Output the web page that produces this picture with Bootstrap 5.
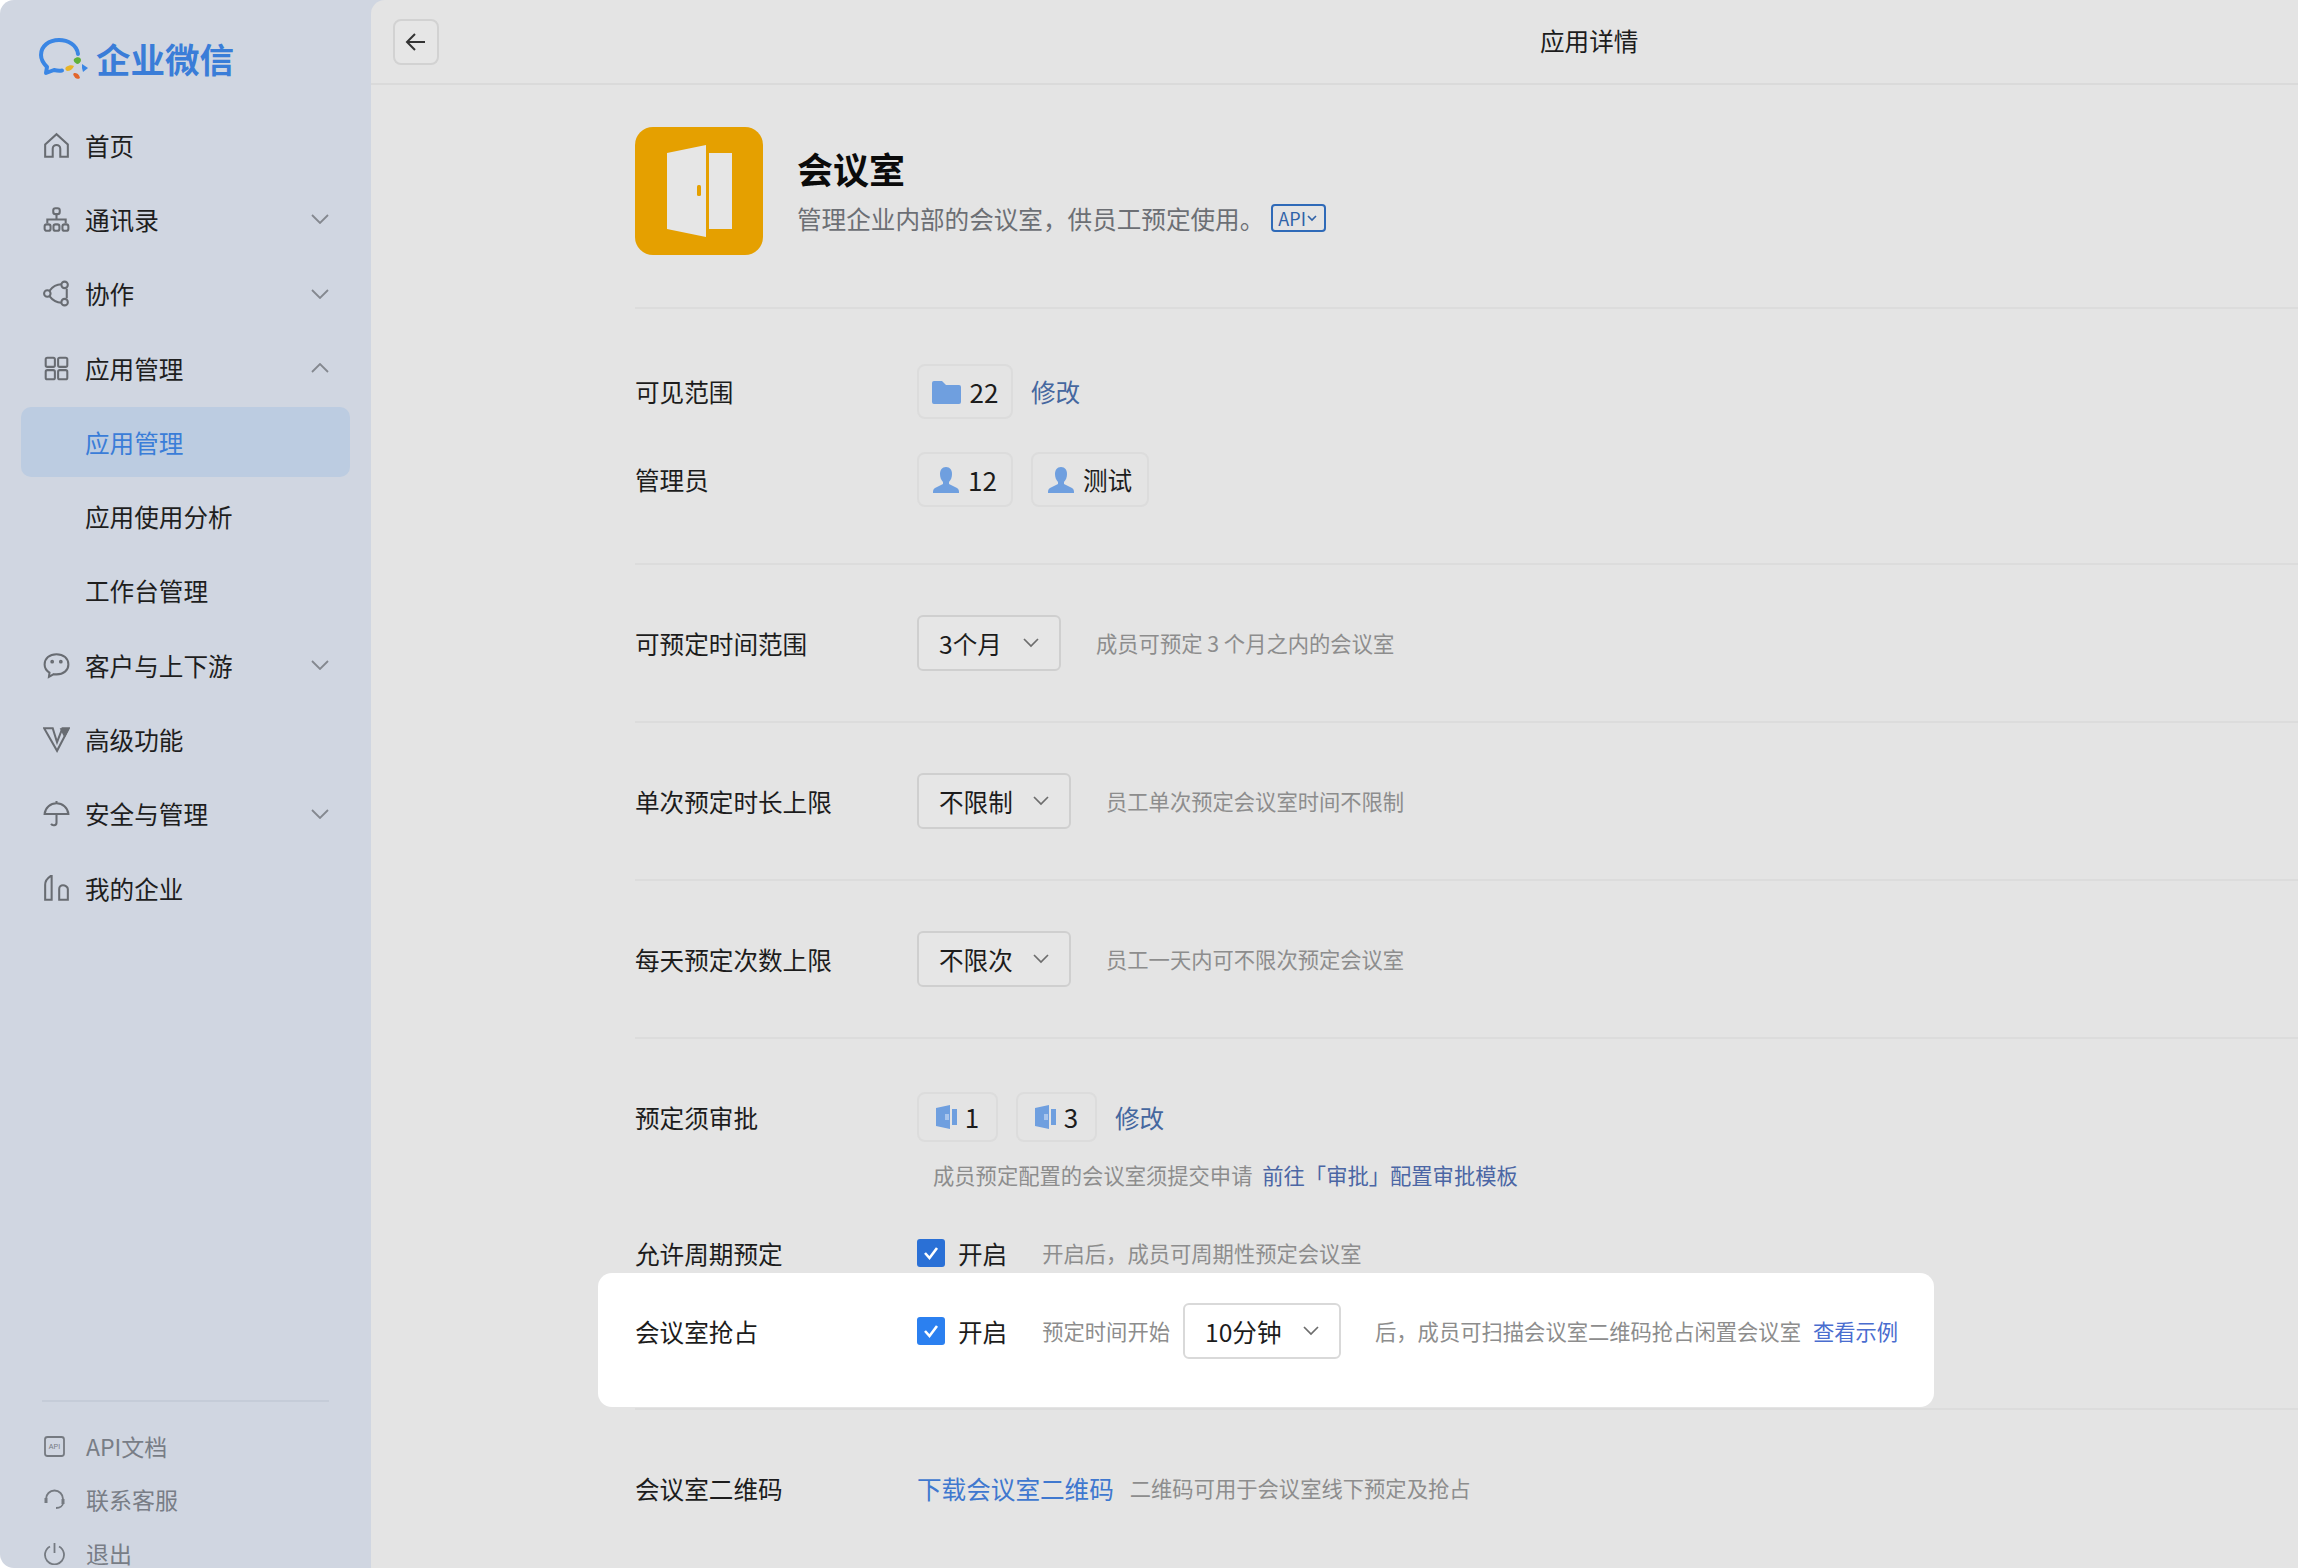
<!DOCTYPE html>
<html lang="zh-CN">
<head>
<meta charset="utf-8">
<title>应用详情</title>
<link href="https://cdn.jsdelivr.net/npm/bootstrap@5.3.0/dist/css/bootstrap.min.css" rel="stylesheet">
<style>
html,body{height:100%;overflow:hidden}
body{background:#fff;font-family:"Noto Sans CJK SC","Noto Sans",sans-serif;font-size:24.6px;color:#1c1c1c}
.win{height:1568px;background:#d0d6e1;border-radius:14px 0 0 14px;overflow:hidden}
.side{width:371px;flex:none}
.brand{height:108px;padding:8px 0 0 39px;gap:7px;color:#3a7dd8;font-size:34.5px;font-weight:700;line-height:1;flex:none}
.navcol{flex:none}
.mitem{height:74.3px;padding:0 42px 0 44px;color:#1e1e1e;flex:none}
.mitem svg.ic{width:27px;height:27px;margin:0 15px 0 -1px;flex:none;fill:none;stroke:#686c72;stroke-width:1.9}
.mitem .chev{width:18px;height:10px;margin-left:auto;fill:none;stroke:#84888f;stroke-width:1.8}
.subitem{padding-left:85px}
.subon{height:70px;margin:2px 21px 2.300px;padding-left:64px;background:#bccce1;border-radius:10px;color:#3a7dd8;flex:none}
.sidefoot{margin:475px 42px 0;border-top:2px solid #c5ccd8;padding-top:17px;flex:none}
.fitem{height:53.500px;font-size:23px;line-height:1;color:#787d86;gap:20px;margin-left:1px}
.fitem:last-child{height:28px;margin-top:13px}
.fitem svg{width:23px;height:23px;flex:none;fill:none;stroke:#757a81;stroke-width:1.8}
.pane{background:#e4e4e4;border-radius:14px 0 0 0;min-width:0;overflow:hidden}
.topbar{height:85px;border-bottom:2px solid #dadada;padding-left:22px;flex:none}
.backb{width:46px;height:46px;border:2px solid #d2d2d2;border-radius:8px;background:#e6e6e6;padding:0}
.pagett{margin-left:1101px;white-space:nowrap;line-height:1;padding-bottom:3px}
.body-wrap{padding-left:264px;flex:none}
.sect{border-bottom:2px solid #dcdcdc}
.apphead{height:224px;padding-top:42px}
.appicon{width:128px;height:128px;border-radius:18px;background:#e5a000;flex:none}
.appmeta{margin-left:34px}
.apptt{font-size:36px;font-weight:700;line-height:1;color:#0b0b0b;margin-top:23px}
.appsub{color:#6c6f74;margin-top:15px;line-height:34px}
.apibadge{width:55px;height:28px;border:2px solid #2f6ab8;border-radius:4px;font-size:18px;color:#2f62a8;padding-left:5px;margin-left:7px;line-height:1;flex:none}
.apibadge svg{width:10px;height:7px;fill:none;stroke:#2f62a8;stroke-width:1.6;margin-left:1px}
.flabel{width:282px;flex:none;white-space:nowrap}
.rowh{min-height:55px}
.tagb{height:55px;border:2px solid #dcdcdc;border-radius:8px;gap:9px;white-space:nowrap;flex:none}
.tagb svg{fill:#6f9fdf;flex:none}
.tagb svg .notch{fill:#a9c5ec}
.num{font-size:26px;line-height:1}
.tagw96{width:96px}
.tagw118{width:118px;margin-left:18px}
.tags{height:50px;width:81px;gap:8px}
.tags2{margin-left:18px}
.mod{margin-left:18px}
.lnk{color:#45679f;text-decoration:none}
.lnk2{color:#3f78cf;text-decoration:none}
.hint{font-size:21.300px;color:#8d8d8d;white-space:nowrap;flex:none}
.hint .lnk{color:#4b66a4}
.hintgap{margin-left:35px}
.apprlink{margin-left:5px}
.selb{height:56px;border:2px solid #cfcfcf;border-radius:6px;padding:0 20px;background:#e6e6e6;white-space:nowrap;justify-content:space-between;flex:none}
.selw144{width:144px}
.selw154{width:154px}
.selb svg{width:16px;height:10px;fill:none;stroke:#6d6d6d;stroke-width:1.7;flex:none}
.s1{padding:55px 0 56px}
.s1 .rowh+.rowh{margin-top:33px}
.ssel{padding:50px 0 50px}
.cbx{width:28px;height:28px;border-radius:3px;background:#2a70d6;flex:none}
.cbx svg{width:18px;height:18px;fill:none;stroke:#fff;stroke-width:2.600}
.cbt{margin-left:13px;margin-right:35px;white-space:nowrap;flex:none}
.hl{background:#fff;border-radius:14px;width:1336px;height:134px;margin:0 0 1px -37px;padding:0 0 18px 37px}
.hl .cbx{background:#2b80f0}
.hl .selb{background:#fff;border-color:#d9d9d9;width:158px;margin:0 34px 0 13px}
.hl .hint .lnk{color:#4a6dcf}
.s6{padding:53px 0 0}
.toprow{height:50px}
.apprhint{margin:18px 0 0 298px;line-height:30px}
.cyc{height:40px;margin-top:43px}
.exlink{margin-left:12px}
.lastrow{height:156px}
</style>
</head>
<body>
<div class="win d-flex">
  <aside class="side d-flex flex-column">
    <div class="brand d-flex align-items-center">
      <svg width="50" height="42" viewBox="0 0 50 42">
        <path d="M39 17C38 8 29 3 20 3 10 3 2 9 2 18c0 5 3 9 6 12l-1 6 8-3c2 .5 5 1 8 .5" fill="none" stroke="#3a86e4" stroke-width="4" stroke-linecap="round" stroke-linejoin="round"/>
        <path d="M35 22c3-3 7-2 7 1 0 2-2 4-4 4-2-1-4-3-3-5z" fill="#5fb13a"/>
        <path d="M27 30c3-2 6-2 8-1-1 3-4 5-7 5-2-1-2-3-1-4z" fill="#e8b428"/>
        <path d="M35 36c3 0 5 1 6 5-3 2-5 0-6-2-1-1-1-2 0-3z" fill="#e2662c"/>
        <path d="M43 27l6 4-5 4-1-4z" fill="#3a86e4"/>
      </svg>
      <span>企业微信</span>
    </div>
    <nav class="navcol d-flex flex-column">
      <div class="mitem d-flex align-items-center"><svg class="ic" viewBox="0 0 25 25"><path d="M2 11.500 12.500 2 23 11.500V23h-7v-7.500a3.500 3.500 0 0 0-7 0V23H2z"/></svg><span>首页</span></div>
      <div class="mitem d-flex align-items-center"><svg class="ic" viewBox="0 0 25 25"><rect x="9.500" y="2" width="6" height="5.500" rx="2"/><path d="M12.500 7.500v5M4 16v-3.500h17V16"/><rect x="1.500" y="17" width="5.500" height="6" rx="2"/><rect x="9.700" y="17" width="5.500" height="6" rx="2"/><rect x="18" y="17" width="5.500" height="6" rx="2"/></svg><span>通讯录</span><svg class="chev" viewBox="0 0 18 10"><path d="M1 1l8 8 8-8"/></svg></div>
      <div class="mitem d-flex align-items-center"><svg class="ic" viewBox="0 0 25 25"><circle cx="20" cy="4.500" r="3"/><circle cx="4" cy="12.500" r="3"/><circle cx="20" cy="20.500" r="3"/><path d="M17 4C12 4 9 6 6 10M6 15c3 4 6 6 11 6M22 8v9"/></svg><span>协作</span><svg class="chev" viewBox="0 0 18 10"><path d="M1 1l8 8 8-8"/></svg></div>
      <div class="mitem d-flex align-items-center"><svg class="ic" viewBox="0 0 25 25"><rect x="2.500" y="2.500" width="8.500" height="8.500" rx="1.500"/><rect x="14" y="2.500" width="8.500" height="8.500" rx="1.500"/><rect x="2.500" y="14" width="8.500" height="8.500" rx="1.500"/><rect x="14" y="14" width="8.500" height="8.500" rx="1.500"/></svg><span>应用管理</span><svg class="chev" viewBox="0 0 18 10"><path d="M1 9l8-8 8 8"/></svg></div>
      <div class="subon d-flex align-items-center"><span>应用管理</span></div>
      <div class="mitem subitem d-flex align-items-center"><span>应用使用分析</span></div>
      <div class="mitem subitem d-flex align-items-center"><span>工作台管理</span></div>
      <div class="mitem d-flex align-items-center"><svg class="ic" viewBox="0 0 25 25"><path d="M12.500 2C6 2 1.500 6 1.500 11.500c0 3.500 2 6 4.500 7.500l-.5 4 4.500-2.500c1 .2 1.500.2 2.500.2C19 20.700 23.500 17 23.500 11.500S19 2 12.500 2z"/><circle cx="8.500" cy="9" r=".8"/><circle cx="16.500" cy="9" r=".8"/></svg><span>客户与上下游</span><svg class="chev" viewBox="0 0 18 10"><path d="M1 1l8 8 8-8"/></svg></div>
      <div class="mitem d-flex align-items-center"><svg class="ic" viewBox="0 0 25 25"><path d="M1 2h8l4 13 5-13h6L13 23z"/><path d="M17 3h6l-3 6z" fill="#686c72"/></svg><span>高级功能</span></div>
      <div class="mitem d-flex align-items-center"><svg class="ic" viewBox="0 0 25 25"><path d="M1.500 13C2 7 7 3 12.500 3S23 7 23.500 13zM12.500 1v2M12.500 13v8c0 3-4 3-5 1"/></svg><span>安全与管理</span><svg class="chev" viewBox="0 0 18 10"><path d="M1 1l8 8 8-8"/></svg></div>
      <div class="mitem d-flex align-items-center"><svg class="ic" viewBox="0 0 25 25"><path d="M2 23V9c0-3 2-6 5-8h1v22zM15 23V13c0-2 1.500-3.500 3.500-3.500S23 11 23 13v10z"/></svg><span>我的企业</span></div>
    </nav>
    <div class="sidefoot">
      <div class="fitem d-flex align-items-center"><svg viewBox="0 0 23 23"><rect x="2" y="2" width="19" height="19" rx="2.500"/><text x="11.500" y="14" font-size="7" text-anchor="middle" fill="#757a81" stroke="none" font-family="Liberation Sans">API</text></svg><span>API文档</span></div>
      <div class="fitem d-flex align-items-center"><svg viewBox="0 0 23 23"><path d="M3 14v-3a8.500 8.500 0 0 1 17 0v4c0 3-3 5-7 5"/><path d="M3 10v5M20 11v5" stroke-width="3"/></svg><span>联系客服</span></div>
      <div class="fitem d-flex align-items-center"><svg viewBox="0 0 23 23"><path d="M7 4.500a9.500 9.500 0 1 0 9 0M11.500 1v10"/></svg><span>退出</span></div>
    </div>
  </aside>

  <main class="pane flex-grow-1 d-flex flex-column">
    <header class="topbar d-flex align-items-center">
      <button class="backb d-flex align-items-center justify-content-center" type="button" aria-label="返回"><svg width="22" height="20" viewBox="0 0 22 20" fill="none" stroke="#333" stroke-width="2"><path d="M20 10H2M10 2l-8 8 8 8"/></svg></button>
      <div class="pagett">应用详情</div>
    </header>
    <div class="body-wrap">
      <section class="sect apphead d-flex">
        <div class="appicon d-flex align-items-center justify-content-center">
          <svg width="65" height="92" viewBox="0 0 65 92"><path d="M0 8 39 0v92L0 84z" fill="#e6e6e6"/><path d="M42 8h23v76H42z" fill="#e6e6e6"/><rect x="30" y="40" width="4" height="11" rx="1.500" fill="#e5a000"/></svg>
        </div>
        <div class="appmeta">
          <div class="apptt">会议室</div>
          <div class="appsub d-flex align-items-center">管理企业内部的会议室，供员工预定使用。<span class="apibadge d-inline-flex align-items-center">API<svg viewBox="0 0 10 7"><path d="M1 1l4 4 4-4"/></svg></span></div>
        </div>
      </section>

      <section class="sect s1">
        <div class="rowh d-flex align-items-center">
          <div class="flabel">可见范围</div>
          <div class="tagb tagw96 d-flex align-items-center justify-content-center"><svg width="29" height="24" viewBox="0 0 29 24"><path d="M0 3a2 2 0 0 1 2-2h8l4 4h13a2 2 0 0 1 2 2v15a2 2 0 0 1-2 2H2a2 2 0 0 1-2-2z"/></svg><span class="num">22</span></div>
          <a class="lnk mod" href="#">修改</a>
        </div>
        <div class="rowh d-flex align-items-center">
          <div class="flabel">管理员</div>
          <div class="tagb tagw96 d-flex align-items-center justify-content-center"><svg width="26" height="26" viewBox="0 0 26 26"><path d="M13 0c4 0 6 3 6 7 0 3-1 6-3 8v2l8 4c2 1 2 3 2 5H0c0-2 0-4 2-5l8-4v-2c-2-2-3-5-3-8 0-4 2-7 6-7z"/></svg><span class="num">12</span></div>
          <div class="tagb tagw118 d-flex align-items-center justify-content-center"><svg width="26" height="26" viewBox="0 0 26 26"><path d="M13 0c4 0 6 3 6 7 0 3-1 6-3 8v2l8 4c2 1 2 3 2 5H0c0-2 0-4 2-5l8-4v-2c-2-2-3-5-3-8 0-4 2-7 6-7z"/></svg><span>测试</span></div>
        </div>
      </section>

      <section class="sect ssel d-flex align-items-center">
        <div class="flabel">可预定时间范围</div>
        <div class="selb selw144 d-flex align-items-center"><span>3个月</span><svg viewBox="0 0 16 10"><path d="M1 1l7 7 7-7"/></svg></div>
        <div class="hint hintgap">成员可预定 3 个月之内的会议室</div>
      </section>

      <section class="sect ssel d-flex align-items-center">
        <div class="flabel">单次预定时长上限</div>
        <div class="selb selw154 d-flex align-items-center"><span>不限制</span><svg viewBox="0 0 16 10"><path d="M1 1l7 7 7-7"/></svg></div>
        <div class="hint hintgap">员工单次预定会议室时间不限制</div>
      </section>

      <section class="sect ssel d-flex align-items-center">
        <div class="flabel">每天预定次数上限</div>
        <div class="selb selw154 d-flex align-items-center"><span>不限次</span><svg viewBox="0 0 16 10"><path d="M1 1l7 7 7-7"/></svg></div>
        <div class="hint hintgap">员工一天内可不限次预定会议室</div>
      </section>

      <section class="sect s6">
        <div class="toprow d-flex align-items-center">
          <div class="flabel">预定须审批</div>
          <div class="tagb tags d-flex align-items-center justify-content-center"><svg width="21" height="24" viewBox="0 0 21 24"><path d="M0 3 14 0v24L0 21z"/><rect class="notch" x="9" y="9" width="4" height="6"/><path d="M16 4h5v16h-5z"/></svg><span class="num">1</span></div>
          <div class="tagb tags tags2 d-flex align-items-center justify-content-center"><svg width="21" height="24" viewBox="0 0 21 24"><path d="M0 3 14 0v24L0 21z"/><rect class="notch" x="9" y="9" width="4" height="6"/><path d="M16 4h5v16h-5z"/></svg><span class="num">3</span></div>
          <a class="lnk mod" href="#">修改</a>
        </div>
        <div class="hint apprhint">成员预定配置的会议室须提交申请 <a class="lnk apprlink" href="#">前往「审批」配置审批模板</a></div>
        <div class="cyc d-flex align-items-center">
          <div class="flabel">允许周期预定</div>
          <div class="cbx d-flex align-items-center justify-content-center"><svg viewBox="0 0 18 18"><path d="M3 9l4.500 5L15 4"/></svg></div>
          <div class="cbt">开启</div>
          <div class="hint">开启后，成员可周期性预定会议室</div>
        </div>
        <div class="hl d-flex align-items-center">
          <div class="flabel">会议室抢占</div>
          <div class="cbx d-flex align-items-center justify-content-center"><svg viewBox="0 0 18 18"><path d="M3 9l4.500 5L15 4"/></svg></div>
          <div class="cbt">开启</div>
          <div class="hint">预定时间开始</div>
          <div class="selb d-flex align-items-center"><span>10分钟</span><svg viewBox="0 0 16 10"><path d="M1 1l7 7 7-7"/></svg></div>
          <div class="hint">后，成员可扫描会议室二维码抢占闲置会议室<a class="lnk exlink" href="#">查看示例</a></div>
        </div>
      </section>

      <section class="lastrow d-flex align-items-center">
        <div class="flabel">会议室二维码</div>
        <a class="lnk2" href="#">下载会议室二维码</a>
        <div class="hint ms-3">二维码可用于会议室线下预定及抢占</div>
      </section>
    </div>
  </main>
</div>
<script src="https://cdn.jsdelivr.net/npm/bootstrap@5.3.0/dist/js/bootstrap.bundle.min.js"></script>
</body>
</html>
